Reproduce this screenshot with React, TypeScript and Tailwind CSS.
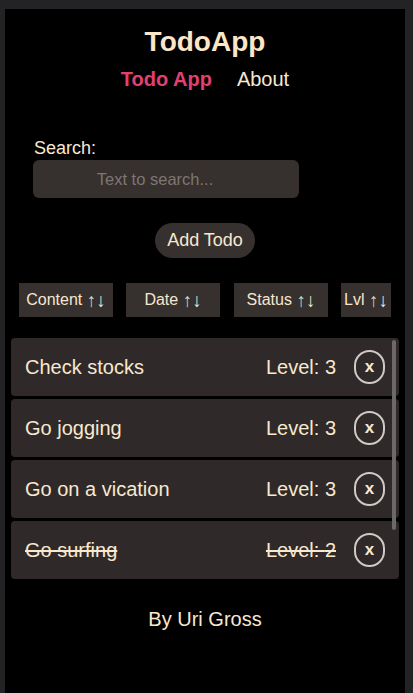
import React from "react";

const todos = [
  { text: "Check stocks", level: 3, done: false },
  { text: "Go jogging", level: 3, done: false },
  { text: "Go on a vication", level: 3, done: false },
  { text: "Go surfing", level: 2, done: true },
];

function SortBtn({ label, w }: { label: string; w: string }) {
  return (
    <button
      className={`${w} h-[34px] bg-[#36302e] text-[#f6e6cf] text-[16px] flex items-center justify-center whitespace-nowrap`}
    >
      {label}&nbsp;
      <span className="text-[19px] leading-none text-[#c3dcb8]">↑</span>
      <span className="text-[19px] leading-none">↓</span>
    </button>
  );
}

export default function App() {
  return (
    <div
      className="bg-[#232326] min-h-[693px] pl-[5px] pt-[9px]"
      style={{ fontFamily: '"Liberation Sans", Arial, sans-serif' }}
    >
      <div className="bg-black w-[400px] h-[684px] flex flex-col items-center text-[#f8e8d0]">
        <h1 className="mt-[16px] text-[28px] leading-[34px] font-bold text-[#fbe6c8]">TodoApp</h1>
        <nav className="mt-[8px] flex gap-[25px] text-[20px] leading-[24px]">
          <span className="font-bold text-[#e2406f]">Todo App</span>
          <span>About</span>
        </nav>
        <div className="self-start ml-[28px] mt-[46px] flex flex-col">
          <label className="ml-[1px] text-[18px] leading-[22px]">Search:</label>
          <input
            className="mt-[1px] w-[266px] h-[38px] rounded-[6px] bg-[#36302e] pr-[22px] text-center text-[16.5px] placeholder:text-[#7d7674] outline-none"
            placeholder="Text to search..."
          />
        </div>
        <button className="mt-[25px] w-[100px] h-[35px] rounded-full bg-[#36302e] text-[18px] text-[#f8e8d0]">
          Add Todo
        </button>
        <div className="self-start ml-[14px] mt-[25px] flex">
          <SortBtn label="Content" w="w-[94px]" />
          <div className="w-[13px]" />
          <SortBtn label="Date" w="w-[94px]" />
          <div className="w-[14px]" />
          <SortBtn label="Status" w="w-[94px]" />
          <div className="w-[13px]" />
          <SortBtn label="Lvl" w="w-[50px]" />
        </div>
        <div className="self-start ml-[6px] mt-[21px] w-[388px] h-[243px] overflow-hidden relative">
          <div className="flex flex-col gap-[3px]">
            {todos.map((t) => (
              <div
                key={t.text}
                className="h-[58px] shrink-0 rounded-[4px] bg-[#2f2a29] flex items-center pl-[14px] pr-[14px] text-[20px]"
              >
                <span className={`flex-1 ${t.done ? "line-through" : ""}`}>{t.text}</span>
                <span className={t.done ? "line-through" : ""}>Level: {t.level}</span>
                <span className="ml-[18px] w-[31px] h-[34px] rounded-full border-2 border-[#cfcac6] flex items-center justify-center text-[17px] font-semibold leading-none pb-[2px]">
                  x
                </span>
              </div>
            ))}
          </div>
          <div className="absolute right-[3px] top-[2px] w-[4px] h-[190px] rounded-full bg-[#6d6968]" />
        </div>
        <footer className="mt-[26px] text-[20px] leading-[24px]">By Uri Gross</footer>
      </div>
    </div>
  );
}
